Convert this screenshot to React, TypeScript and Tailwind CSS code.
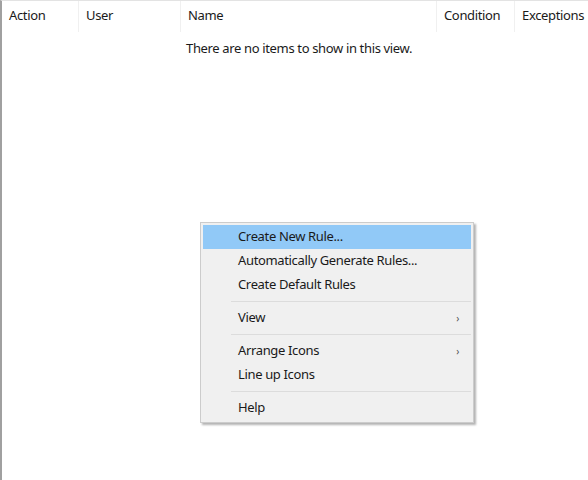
import React from "react";

const font = { fontFamily: '"Segoe UI", "Noto Sans", "Open Sans", sans-serif' };

const columns = [
  { label: "Action", width: "w-[77px]" },
  { label: "User", width: "w-[102px]" },
  { label: "Name", width: "w-[256px]" },
  { label: "Condition", width: "w-[78px]" },
  { label: "Exceptions", width: "flex-1" },
];

type MenuEntry =
  | { kind: "item"; label: string; active?: boolean; sub?: boolean }
  | { kind: "sep" };

const menu: MenuEntry[] = [
  { kind: "item", label: "Create New Rule...", active: true },
  { kind: "item", label: "Automatically Generate Rules..." },
  { kind: "item", label: "Create Default Rules" },
  { kind: "sep" },
  { kind: "item", label: "View", sub: true },
  { kind: "sep" },
  { kind: "item", label: "Arrange Icons", sub: true },
  { kind: "item", label: "Line up Icons" },
  { kind: "sep" },
  { kind: "item", label: "Help" },
];

export default function App() {
  return (
    <div
      className="relative h-[480px] w-[588px] overflow-hidden border-l-2 border-t border-l-[#a0a0a0] border-t-[#e3e3e3] bg-white text-[13px] tracking-[-0.35px] text-[#1a1a1a]"
      style={font}
    >
      <div className="flex h-[31px]">
        {columns.map((c, i) => (
          <div
            key={c.label}
            className={`${c.width} flex items-center pl-[7px] pb-[2px] ${
              i < columns.length - 1 ? "border-r border-[#f0f0f0]" : ""
            }`}
          >
            {c.label}
          </div>
        ))}
      </div>
      <div className="pl-[184px] pt-[7px]">There are no items to show in this view.</div>

      <div className="absolute left-[198px] top-[221px] w-[274px] border border-[#cccccc] bg-[#f0f0f0] p-[2px] shadow-[2px_2px_2px_rgba(0,0,0,0.3)]">
        {menu.map((m, i) =>
          m.kind === "sep" ? (
            <div key={i} className="flex h-[9px] items-center pl-[28px]">
              <div className="h-px w-full bg-[#dcdcdc]" />
            </div>
          ) : (
            <div
              key={i}
              className={`flex h-6 items-center justify-between pl-[35px] pr-[12px] ${
                m.active ? "bg-[#91c9f7]" : ""
              }`}
            >
              <span>{m.label}</span>
              {m.sub ? <span className="text-[10px] text-[#555]">›</span> : null}
            </div>
          )
        )}
      </div>
    </div>
  );
}
